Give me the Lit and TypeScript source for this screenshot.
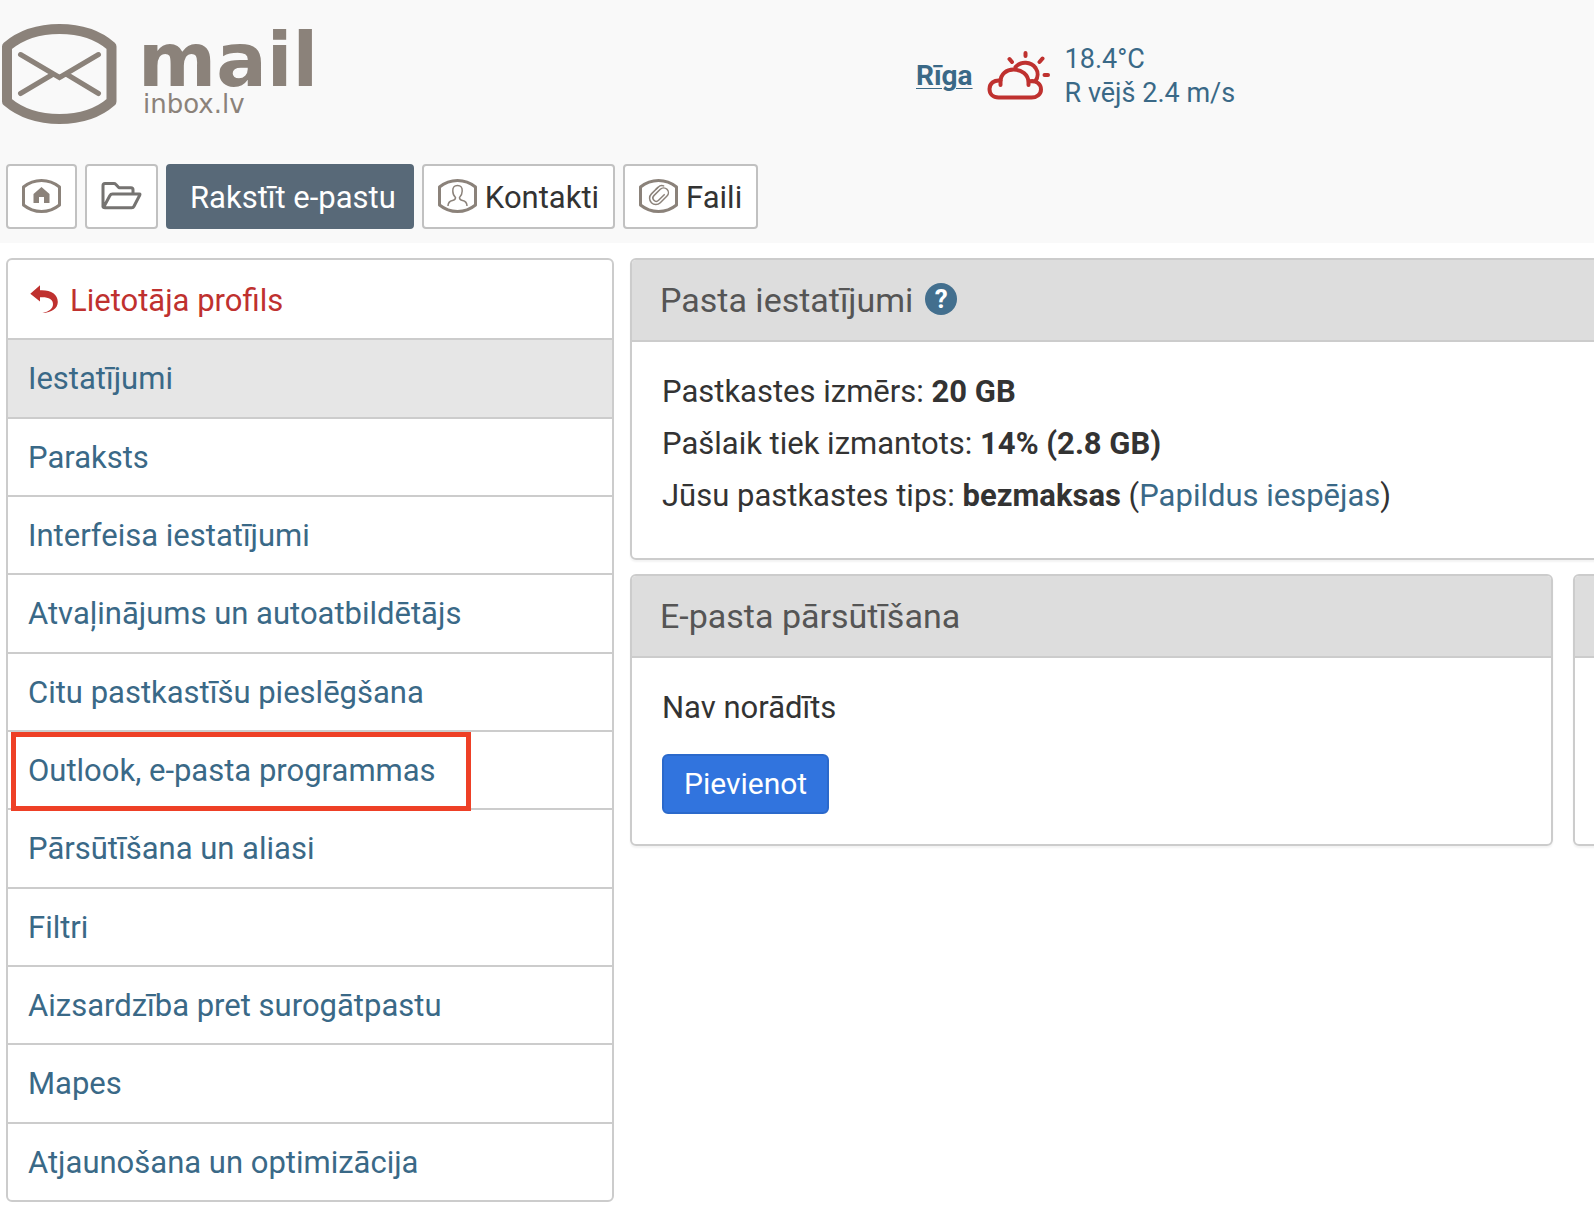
import { LitElement, html, css, svg, nothing } from 'lit';
import { customElement, state } from 'lit/decorators.js';
import { classMap } from 'lit/directives/class-map.js';

interface MenuItem {
  label: string;
  back?: boolean;
  marked?: boolean;
}

const MENU: MenuItem[] = [
  { label: 'Lietotāja profils', back: true },
  { label: 'Iestatījumi' },
  { label: 'Paraksts' },
  { label: 'Interfeisa iestatījumi' },
  { label: 'Atvaļinājums un autoatbildētājs' },
  { label: 'Citu pastkastīšu pieslēgšana' },
  { label: 'Outlook, e-pasta programmas', marked: true },
  { label: 'Pārsūtīšana un aliasi' },
  { label: 'Filtri' },
  { label: 'Aizsardzība pret surogātpastu' },
  { label: 'Mapes' },
  { label: 'Atjaunošana un optimizācija' },
];

const badgeFrame = svg`<path d="M1.5 8 Q9.5 1.5 19.5 1.5 Q29.5 1.5 37.5 8 V26 Q29.5 32.5 19.5 32.5 Q9.5 32.5 1.5 26 Z" fill="none" stroke="#8b827a" stroke-width="3" stroke-linejoin="round"/>`;

const homeIcon = html`<svg width="39" height="34" viewBox="0 0 39 34" aria-hidden="true">
  ${badgeFrame}
  <path d="M19.5 8 L27.5 15 V24 H22 V18 H17 V24 H11.500 V15 Z" fill="#8b827a"/>
</svg>`;

const folderIcon = html`<svg width="41" height="28" viewBox="0 0 40 28" aria-hidden="true">
  <path d="M1.500 25.500 V3.500 Q1.500 1.500 3.500 1.500 H12.500 Q13.500 1.500 14.200 2.300 L17.500 5.700 H29.500 Q31.500 5.700 31.500 7.700 V11.700 M2 25.500 L8.300 13.700 Q9.200 12 11 12 H38 Q38.800 12 38.300 13 L32.500 24.300 Q31.800 25.700 30.300 25.700 H3.500 Q1.500 25.700 1.500 23.700" fill="none" stroke="#757371" stroke-width="3" stroke-linejoin="round"/>
</svg>`;

const contactIcon = html`<svg width="39" height="34" viewBox="0 0 39 34" aria-hidden="true">
  ${badgeFrame}
  <path d="M10 27 Q10 22.500 14.500 21.500 Q17.500 21 17.500 18.500 Q14.800 16 14.800 12 Q14.500 6.500 19.500 6.500 Q24.500 6.500 24.200 12 Q24.200 16 21.500 18.500 Q21.500 21 24.500 21.500 Q29 22.500 29 27" fill="none" stroke="#8b827a" stroke-width="1.500"/>
</svg>`;

const clipIcon = html`<svg width="39" height="34" viewBox="0 0 39 34" aria-hidden="true">
  ${badgeFrame}
  <g transform="rotate(45 19.500 17)" fill="none" stroke="#8b827a" stroke-width="1.500" stroke-linecap="round">
    <path d="M13 11.500 V20.500 A6 6 0 0 0 25.500 20.500 V11 A4.700 4.700 0 0 0 16 11 V20 A3.300 3.300 0 0 0 22.600 20 V12"/>
    <path d="M13 14 V11 Q13 7.500 16 6.200"/>
  </g>
</svg>`;

const backIcon = html`<svg width="32" height="32" viewBox="0 0 32 32" aria-hidden="true">
  <path d="M2.300 10.700 L12 2.200 V7.300 C22.500 6.700 29.800 11 29.800 19 C29.800 25.500 23.500 29.700 14.500 29.900 C21 28.600 25 25.800 25 21 C25 16 20 13.700 12 14.300 V18.600 Z" fill="#bf312f"/>
</svg>`;

const weatherIcon = html`<svg width="64" height="52" viewBox="0 0 64 52" aria-hidden="true">
  <g fill="none" stroke="#bf312f" stroke-width="4" stroke-linecap="round">
    <path d="M13.500 35 V31.500 C13.500 24 19.500 19.500 26.500 19.500 C34.500 19.500 41.500 24.500 41.500 32.500 V35"/>
    <path d="M13.500 30.500 C7 29.700 2.500 33.500 2.500 39 C2.500 44 6 47.500 11.500 47.500 H44.500 C50 47.500 54 44 54 39.500 C54 34 49.500 30.300 43 31.300"/>
    <path d="M28.500 17 C34 10.700 44 11.500 48.600 18 C51.500 22.300 51 27.500 48.500 31"/>
    <path d="M38.500 3 V6 M22.500 9 L25 12 M55.500 8.500 L52.500 12 M57.500 25 H61"/>
  </g>
</svg>`;

const logo = html`<svg width="340" height="128" viewBox="0 0 340 128" role="img" aria-label="mail inbox.lv">
  <g fill="none" stroke="#8b827a">
    <path d="M7 46.500 C20 35.500 37 29 59.500 29 C82 29 99 35.500 111.500 46.500 V101.500 C99 112.500 82 119 59.500 119 C37 119 20 112.500 7 101.500 Z" stroke-width="10" stroke-linejoin="round"/>
    <path d="M20.500 54.500 L59.500 77.500 L98.500 54.500 M20.500 93.500 L52.500 74.500 M98.500 93.500 L67 74.500" stroke-width="5" stroke-linecap="round"/>
  </g>
  <text class="word" x="138" y="86">mail</text>
  <text class="domain" x="143" y="113">inbox.lv</text>
</svg>`;

@customElement('app-root')
export class AppRoot extends LitElement {
  @state() private selected = 'Iestatījumi';

  static styles = css`
    :host {
      display: flex;
      flex-direction: column;
      min-height: 100vh;
      overflow: hidden;
      background: #fff;
      color: #333;
      font: 31px/40px Roboto, 'Liberation Sans', sans-serif;
    }
    * { box-sizing: border-box; }
    a { color: #3a6987; text-decoration: none; }
    svg { display: block; flex: none; }
    button { font: inherit; color: inherit; margin: 0; cursor: pointer; }

    .header { background: #f9f9f9; padding-bottom: 14px; }
    .top {
      display: grid;
      grid-template-columns: 916px 1fr;
      align-items: start;
      height: 164px;
    }
    .word { font: bold 75px 'DejaVu Sans', sans-serif; fill: #8b827a; }
    .domain { font: 26px 'DejaVu Sans', sans-serif; fill: #8b827a; }

    .weather {
      display: flex;
      align-items: center;
      gap: 14px;
      padding-top: 42px;
      font-size: 27px;
      line-height: 34px;
      color: #3a6987;
    }
    .city { font-size: 28px; font-weight: 700; text-decoration: underline; text-decoration-thickness: 1px; text-underline-offset: 3px; }

    .toolbar { display: flex; gap: 8px; padding-left: 6px; }
    .tool {
      display: flex;
      align-items: center;
      gap: 8px;
      height: 65px;
      padding: 2px 14px 0;
      border: 2px solid #c1c1c1;
      border-radius: 4px;
      background: #fff;
    }
    .tool svg { margin-bottom: 4px; }
    .compose { padding: 2px 16px 0 22px; border-color: #586978; background: #586978; color: #fff; }

    .main {
      flex: 1;
      display: grid;
      grid-template-columns: minmax(0, 608px) minmax(0, 1fr);
      gap: 16px;
      padding: 15px 0 14px 6px;
    }
    .menu {
      display: flex;
      flex-direction: column;
      margin: 0;
      padding: 0;
      list-style: none;
      border: 2px solid #ccc;
      border-radius: 6px;
      overflow: hidden;
    }
    .item { position: relative; flex: 1; display: flex; border-top: 2px solid #ccc; }
    .item:first-child { border-color: transparent; }
    .link { flex: 1; display: flex; align-items: center; gap: 10px; min-height: 64px; padding: 2px 20px 0; }
    .current { background: #e6e6e6; }
    .back { color: #bf312f; }
    .back svg { margin-bottom: 4px; }
    .marker {
      position: absolute;
      top: 0;
      bottom: -3px;
      left: 3px;
      width: 460px;
      border: 5px solid #ee4026;
      pointer-events: none;
      z-index: 1;
    }

    .panels {
      display: grid;
      grid-template-columns: calc(100% - 41px) calc(100% - 41px);
      align-content: start;
      gap: 14px 20px;
    }
    .panel {
      border: 2px solid #ccc;
      border-radius: 6px;
      overflow: hidden;
      box-shadow: 0 2px 2px rgba(0, 0, 0, 0.05);
    }
    .wide { grid-column: span 2; }
    .head {
      display: flex;
      align-items: center;
      gap: 12px;
      min-height: 82px;
      padding: 20px 28px;
      border-bottom: 2px solid #ccc;
      background: #ddd;
    }
    .title { margin: 0; font-size: 34px; font-weight: 400; color: #555; }
    .help {
      width: 32px;
      height: 32px;
      margin-bottom: 2px;
      padding: 0;
      border: 0;
      border-radius: 50%;
      background: #436f8e;
      color: #fff;
      font-size: 26px;
      font-weight: 700;
      line-height: 32px;
    }
    .body { padding: 24px 30px 30px; line-height: 52px; }
    .summary { padding-bottom: 36px; }
    .line { margin: 0; }
    .connect {
      display: block;
      height: 60px;
      margin-top: 20px;
      padding: 0 20px;
      border: 2px solid #2b69cb;
      border-radius: 6px;
      background: #3174de;
      color: #fff;
      font-size: 30px;
      line-height: 40px;
    }
  `;

  private pick(e: Event, item: MenuItem) {
    e.preventDefault();
    if (!item.back) this.selected = item.label;
  }

  private renderItem(item: MenuItem) {
    const classes = { link: true, back: !!item.back, current: item.label === this.selected };
    return html`<li class="item">
      <a class=${classMap(classes)} href="#" @click=${(e: Event) => this.pick(e, item)}>
        ${item.back ? backIcon : nothing}<span>${item.label}</span>
      </a>
      ${item.marked ? html`<span class="marker"></span>` : nothing}
    </li>`;
  }

  render() {
    return html`
      <header class="header">
        <div class="top">
          <a href="#">${logo}</a>
          <div class="weather">
            <a class="city" href="#">Rīga</a>
            ${weatherIcon}
            <div><div>18.4°C</div><div>R vējš 2.4 m/s</div></div>
          </div>
        </div>
        <nav class="toolbar">
          <button class="tool" aria-label="Sākums">${homeIcon}</button>
          <button class="tool" aria-label="Mapes">${folderIcon}</button>
          <button class="tool compose">Rakstīt e-pastu</button>
          <button class="tool">${contactIcon}<span>Kontakti</span></button>
          <button class="tool">${clipIcon}<span>Faili</span></button>
        </nav>
      </header>
      <main class="main">
        <ul class="menu">${MENU.map((item) => this.renderItem(item))}</ul>
        <div class="panels">
          <section class="panel wide">
            <div class="head">
              <h2 class="title">Pasta iestatījumi</h2>
              <button class="help">?</button>
            </div>
            <div class="body summary">
              <p class="line">Pastkastes izmērs: <b>20 GB</b></p>
              <p class="line">Pašlaik tiek izmantots: <b>14% (2.8 GB)</b></p>
              <p class="line">Jūsu pastkastes tips: <b>bezmaksas</b> (<a href="#">Papildus iespējas</a>)</p>
            </div>
          </section>
          <section class="panel">
            <div class="head"><h2 class="title">E-pasta pārsūtīšana</h2></div>
            <div class="body">
              <p class="line">Nav norādīts</p>
              <button class="connect">Pievienot</button>
            </div>
          </section>
          <section class="panel"><div class="head"></div></section>
        </div>
      </main>
    `;
  }
}
